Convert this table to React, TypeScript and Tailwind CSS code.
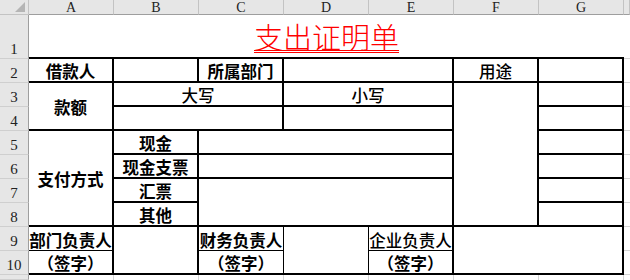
import React from "react";

const cjk = "font-['Noto_Sans_CJK_SC','Noto_Sans',sans-serif]";

function Cell({ cls, children, bold = true }: { cls: string; children?: React.ReactNode; bold?: boolean }) {
  return (
    <div
      className={`flex items-center justify-center pt-[3px] border-black text-black text-[16.5px] leading-none whitespace-nowrap ${bold ? "font-bold" : "font-medium"} ${cjk} ${cls}`}
    >
      {children}
    </div>
  );
}

function ColHead({ cls, label }: { cls: string; label?: string }) {
  return (
    <div
      className={`flex items-start justify-center pt-[1px] bg-[#e6e6e6] border-r border-b border-r-[#c3c3c3] border-b-[#9e9e9e] text-[14px] leading-none text-[#222] font-['Liberation_Serif',serif] overflow-hidden ${cls}`}
    >
      {label}
    </div>
  );
}

function RowHead({ cls, label }: { cls: string; label?: string }) {
  return (
    <div
      className={`flex items-end justify-center pb-[1px] bg-[#e6e6e6] border-r border-b border-r-[#9e9e9e] border-b-[#cfcfcf] text-[15px] leading-none text-[#222] font-['Liberation_Serif',serif] overflow-hidden ${cls}`}
    >
      {label}
    </div>
  );
}

export default function App() {
  return (
    <div className="w-[630px] h-[280px] bg-white overflow-hidden grid grid-cols-[29px_repeat(7,85px)_1fr] grid-rows-[15px_44px_repeat(9,24px)_1fr]">
      {/* corner */}
      <div className="col-start-1 row-start-1 relative bg-[#e6e6e6] border-r border-b border-[#c3c3c3]">
        <svg className="absolute left-0 top-0" width="28" height="14" viewBox="0 0 28 14">
          <polygon points="25,2 25,12 15,12" fill="#b5b5b5" />
        </svg>
      </div>
      {/* column headers */}
      <ColHead cls="col-start-2 row-start-1" label="A" />
      <ColHead cls="col-start-3 row-start-1" label="B" />
      <ColHead cls="col-start-4 row-start-1" label="C" />
      <ColHead cls="col-start-5 row-start-1" label="D" />
      <ColHead cls="col-start-6 row-start-1" label="E" />
      <ColHead cls="col-start-7 row-start-1" label="F" />
      <ColHead cls="col-start-8 row-start-1" label="G" />
      <ColHead cls="col-start-9 row-start-1" />
      {/* row headers */}
      <RowHead cls="col-start-1 row-start-2" label="1" />
      <RowHead cls="col-start-1 row-start-3" label="2" />
      <RowHead cls="col-start-1 row-start-4" label="3" />
      <RowHead cls="col-start-1 row-start-5" label="4" />
      <RowHead cls="col-start-1 row-start-6" label="5" />
      <RowHead cls="col-start-1 row-start-7" label="6" />
      <RowHead cls="col-start-1 row-start-8" label="7" />
      <RowHead cls="col-start-1 row-start-9" label="8" />
      <RowHead cls="col-start-1 row-start-10" label="9" />
      <RowHead cls="col-start-1 row-start-11" label="10" />
      <RowHead cls="col-start-1 row-start-12" />

      {/* column H gridlines */}
      <div className="col-start-9 row-start-2 border-b border-[#d4d4d4]" />
      <div className="col-start-9 row-start-3 border-b border-[#d4d4d4]" />
      <div className="col-start-9 row-start-4 border-b border-[#d4d4d4]" />
      <div className="col-start-9 row-start-5 border-b border-[#d4d4d4]" />
      <div className="col-start-9 row-start-6 border-b border-[#d4d4d4]" />
      <div className="col-start-9 row-start-7 border-b border-[#d4d4d4]" />
      <div className="col-start-9 row-start-8 border-b border-[#d4d4d4]" />
      <div className="col-start-9 row-start-9 border-b border-[#d4d4d4]" />
      <div className="col-start-9 row-start-10 border-b border-[#d4d4d4]" />
      <div className="col-start-9 row-start-11 border-b border-[#d4d4d4]" />
      {/* row 11 gridlines */}
      <div className="col-start-2 row-start-12 border-r border-[#d4d4d4]" />
      <div className="col-start-3 row-start-12 border-r border-[#d4d4d4]" />
      <div className="col-start-4 row-start-12 border-r border-[#d4d4d4]" />
      <div className="col-start-5 row-start-12 border-r border-[#d4d4d4]" />
      <div className="col-start-6 row-start-12 border-r border-[#d4d4d4]" />
      <div className="col-start-7 row-start-12 border-r border-[#d4d4d4]" />
      <div className="col-start-8 row-start-12 border-r border-[#d4d4d4]" />

      {/* Title */}
      <div className="col-start-2 col-span-7 row-start-2 flex items-end justify-center pb-[6px] border-b-2 border-black">
        <span
          className={`text-[29px] leading-none font-light text-[#ff0000] underline decoration-double decoration-1 underline-offset-[1px] ${cjk}`}
        >
          支出证明单
        </span>
      </div>

      {/* Row 2 */}
      <Cell cls="col-start-2 row-start-3 border-r-2 border-b-2">借款人</Cell>
      <Cell cls="col-start-3 row-start-3 border-r-2 border-b-2" />
      <Cell cls="col-start-4 row-start-3 border-r-2 border-b-2">所属部门</Cell>
      <Cell cls="col-start-5 col-span-2 row-start-3 border-r-2 border-b-2" />
      <Cell cls="col-start-7 row-start-3 border-r-2 border-b-2" bold={false}>用途</Cell>
      <Cell cls="col-start-8 row-start-3 border-r-2 border-b-2" />

      {/* Rows 3-4 */}
      <Cell cls="col-start-2 row-start-4 row-span-2 border-r-2 border-b-2">款额</Cell>
      <Cell cls="col-start-3 col-span-2 row-start-4 border-r-2 border-b-2" bold={false}>大写</Cell>
      <Cell cls="col-start-5 col-span-2 row-start-4 border-r-2 border-b-2" bold={false}>小写</Cell>
      <Cell cls="col-start-3 col-span-2 row-start-5 border-r-2 border-b-2" />
      <Cell cls="col-start-5 col-span-2 row-start-5 border-r-2 border-b-2" />
      <Cell cls="col-start-7 row-start-4 row-span-6 border-r-2 border-b-2" />
      <Cell cls="col-start-8 row-start-4 border-r-2 border-b-2" />
      <Cell cls="col-start-8 row-start-5 border-r-2 border-b-2" />
      <Cell cls="col-start-8 row-start-6 border-r-2 border-b-2" />
      <Cell cls="col-start-8 row-start-7 border-r-2 border-b-2" />
      <Cell cls="col-start-8 row-start-8 border-r-2 border-b-2" />
      <Cell cls="col-start-8 row-start-9 border-r-2 border-b-2" />

      {/* Rows 5-8 */}
      <Cell cls="col-start-2 row-start-6 row-span-4 border-r-2 border-b-2">支付方式</Cell>
      <Cell cls="col-start-3 row-start-6 border-r-2 border-b-2">现金</Cell>
      <Cell cls="col-start-3 row-start-7 border-r-2 border-b-2">现金支票</Cell>
      <Cell cls="col-start-3 row-start-8 border-r-2 border-b-2">汇票</Cell>
      <Cell cls="col-start-3 row-start-9 border-r-2 border-b-2">其他</Cell>
      <Cell cls="col-start-4 col-span-3 row-start-6 border-r-2 border-b-2" />
      <Cell cls="col-start-4 col-span-3 row-start-7 border-r-2 border-b-2" />
      <Cell cls="col-start-4 col-span-3 row-start-8 row-span-2 border-r-2 border-b-2" />

      {/* Rows 9-10 */}
      <Cell cls="col-start-2 row-start-10 border-r-2 border-b">部门负责人</Cell>
      <Cell cls="col-start-2 row-start-11 border-r-2 border-b-2">（签字）</Cell>
      <Cell cls="col-start-3 row-start-10 row-span-2 border-r-2 border-b-2" />
      <Cell cls="col-start-4 row-start-10 border-r border-b">财务负责人</Cell>
      <Cell cls="col-start-4 row-start-11 border-r border-b-2">（签字）</Cell>
      <Cell cls="col-start-5 row-start-10 row-span-2 border-r border-b-2" />
      <Cell cls="col-start-6 row-start-10 border-r-2 border-b" bold={false}>企业负责人</Cell>
      <Cell cls="col-start-6 row-start-11 border-r-2 border-b-2">（签字）</Cell>
      <Cell cls="col-start-7 col-span-2 row-start-10 row-span-2 border-r-2 border-b-2" />
    </div>
  );
}
